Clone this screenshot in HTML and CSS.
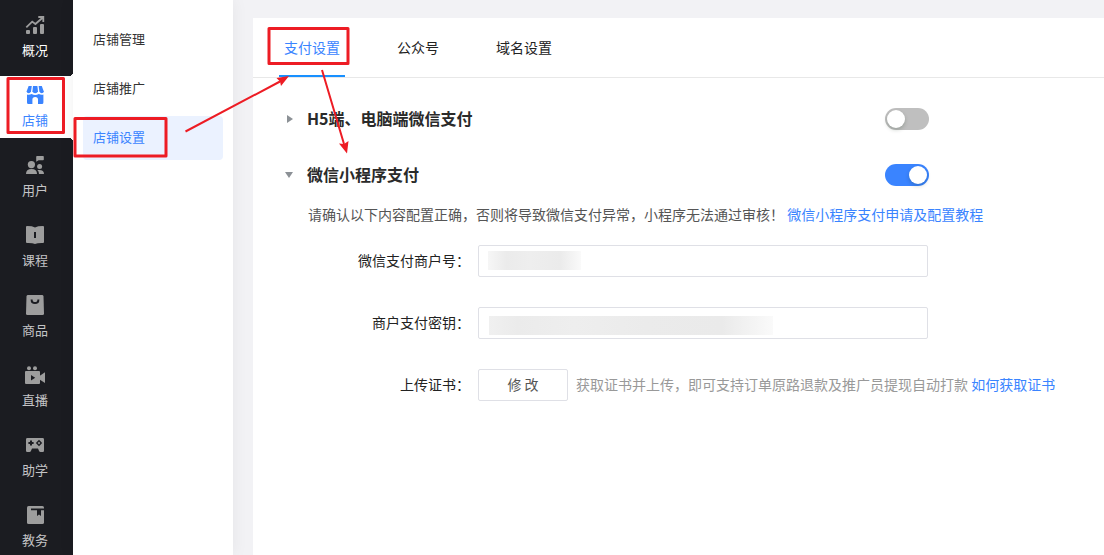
FILE: index.html
```
<!DOCTYPE html>
<html lang="zh-CN">
<head>
    <meta charset="utf-8">
    <title>店铺设置</title>
    <link rel="stylesheet" href="styles.css">
</head>
<body>
    <div class="layout">
        <nav class="sidebar">
            <a class="nav-item current" href="#">
                <svg class="nav-icon" viewBox="0 0 20 20">
                    <rect x="1" y="14" width="4" height="4" rx="1"/>
                    <rect x="8" y="11" width="4" height="7" rx="1"/>
                    <rect x="15" y="8" width="4" height="10" rx="1"/>
                    <path class="line" d="M1.3 11.3L7.2 5.6L10.4 8L17.6 1.7M13.3 1H18.3V6"/>
                </svg>
                <span>概况</span>
            </a>
            <a class="nav-item active" href="#">
                <svg class="nav-icon" viewBox="0 0 20 20">
                    <path d="M3.6 0H6.8L6 5.6Q5.2 7.3 3.7 7.3Q1.8 7.3 1.6 5.5Z"/>
                    <path d="M8 0H12.4L13 5.6Q12.2 7.3 10.2 7.3Q8.2 7.3 7.4 5.6Z"/>
                    <path d="M13.6 0H16.8L18.8 5.5Q18.6 7.3 16.7 7.3Q15.2 7.3 14.4 5.6Z"/>
                    <path d="M2 8.6Q4.6 9.2 6.6 8Q10.2 10 13.8 8Q15.8 9.2 18.4 8.6V16.5Q18.4 18 17 18H13V13.5Q13 11 10.2 11Q7.4 11 7.4 13.5V18H3.4Q2 18 2 16.5Z"/>
                </svg>
                <span>店铺</span>
            </a>
            <a class="nav-item" href="#">
                <svg class="nav-icon" viewBox="0 0 20 20">
                    <circle cx="6.4" cy="8.6" r="3.6"/>
                    <path d="M1 18Q1 13 6.5 13Q12 13 12 18Z"/>
                    <circle cx="14.6" cy="10.4" r="2.5"/>
                    <path d="M12.4 14.1Q19 13.2 19 18H14Q14 15.6 12.4 14.1Z"/>
                    <path d="M12 0H18Q18.8 0 18.8 .8V3.4Q18.8 4.2 18 4.2H13.6L11.2 5.8V.8Q11.2 0 12 0Z"/>
                </svg>
                <span>用户</span>
            </a>
            <a class="nav-item" href="#">
                <svg class="nav-icon" viewBox="0 0 20 20">
                    <path d="M2 0Q7.5 0 10 1.4Q12.5 0 18 0Q19 0 19 1V16Q19 17 18 17Q12.5 16.8 10 18Q7.5 16.8 2 17Q1 17 1 16V1Q1 0 2 0Z"/>
                    <rect class="hole" x="9" y="6" width="2" height="6"/>
                </svg>
                <span>课程</span>
            </a>
            <a class="nav-item" href="#">
                <svg class="nav-icon" viewBox="0 0 20 20">
                    <path d="M3 -1H17Q18.4 -1 18.5 .4L19 17.5Q19 19 17.6 19H2.4Q1 19 1 17.5L1.5 .4Q1.6 -1 3 -1Z"/>
                    <path class="hole-line" d="M6.6 3.4Q6.6 7 10 7Q13.4 7 13.4 3.4"/>
                </svg>
                <span>商品</span>
            </a>
            <a class="nav-item" href="#">
                <svg class="nav-icon" viewBox="0 0 20 20">
                    <circle cx="4" cy="2.2" r="2"/>
                    <circle cx="10" cy="2.2" r="2"/>
                    <rect x="0" y="5" width="15" height="13" rx="1"/>
                    <path d="M14.5 10L20 6.2V17L14.5 13.4Z"/>
                    <path class="hole" d="M6 9V14.4L10.2 11.7Z"/>
                </svg>
                <span>直播</span>
            </a>
            <a class="nav-item" href="#">
                <svg class="nav-icon" viewBox="0 0 20 20">
                    <path d="M2.4 2H17.6Q19 2 19 3.4V14.8Q19 16 17.8 16H15.4Q14.6 16 14.2 15.2L13 12.6H7L5.8 15.2Q5.4 16 4.6 16H2.2Q1 16 1 14.8V3.4Q1 2 2.4 2Z"/>
                    <path class="hole" d="M5 4.4H7V6H8.6V8H7V9.6H5V8H3.4V6H5Z"/>
                    <path class="hole" d="M14 3.8L17.2 7L14 10.2L10.8 7Z"/>
                    <path d="M14 5.7L15.3 7L14 8.3L12.7 7Z"/>
                </svg>
                <span>助学</span>
            </a>
            <a class="nav-item" href="#">
                <svg class="nav-icon" viewBox="0 0 20 20">
                    <rect x="2" y="0" width="17" height="18" rx="1.6"/>
                    <path class="hole" d="M6 2.4H19V4.2H16V10L14 8.4L12 10V4.2H6Z"/>
                </svg>
                <span>教务</span>
            </a>
        </nav>

        <nav class="submenu">
            <a class="submenu-item" href="#">店铺管理</a>
            <a class="submenu-item" href="#">店铺推广</a>
            <a class="submenu-item active" href="#">店铺设置</a>
        </nav>

        <main class="content">
            <div class="card">
                <div class="tabs" role="tablist">
                    <button class="tab active" type="button" role="tab" aria-selected="true">支付设置</button>
                    <button class="tab" type="button" role="tab" aria-selected="false">公众号</button>
                    <button class="tab" type="button" role="tab" aria-selected="false">域名设置</button>
                </div>

                <div class="panels">
                    <div class="panel-head">
                        <span class="arrow arrow-right"></span>
                        <label class="panel-title" for="h5Pay">H5端、电脑端微信支付</label>
                        <input class="switch" type="checkbox" id="h5Pay">
                    </div>
                    <div class="panel-head">
                        <span class="arrow arrow-down"></span>
                        <label class="panel-title" for="miniPay">微信小程序支付</label>
                        <input class="switch" type="checkbox" id="miniPay" checked>
                    </div>

                    <p class="tip">请确认以下内容配置正确，否则将导致微信支付异常，小程序无法通过审核！ <a href="#">微信小程序支付申请及配置教程</a></p>

                    <form class="form">
                        <div class="form-row">
                            <label class="form-label" for="merchantId">微信支付商户号：</label>
                            <input class="form-input masked-short" type="text" id="merchantId">
                        </div>
                        <div class="form-row">
                            <label class="form-label" for="merchantKey">商户支付密钥：</label>
                            <input class="form-input masked-long" type="text" id="merchantKey">
                        </div>
                        <div class="form-row">
                            <label class="form-label" for="certBtn">上传证书：</label>
                            <button class="btn" type="button" id="certBtn">修 改</button>
                            <span class="hint">获取证书并上传，即可支持订单原路退款及推广员提现自动打款 <a href="#">如何获取证书</a></span>
                        </div>
                    </form>
                </div>
            </div>
        </main>
    </div>

    <!-- red guide marks: store > store settings > payment settings -->
    <svg class="guide" width="400" height="200" viewBox="0 0 400 200">
        <rect x="8" y="78.5" width="55.5" height="54"/>
        <rect x="75" y="118.5" width="91" height="37.5"/>
        <rect x="269" y="28.5" width="79" height="35"/>
        <path class="guide-line" d="M185.5 131.5L280 81.5M322 70L344 144"/>
        <path class="guide-head" d="M289 76L276.5 78L280 81.5L281 86ZM347 153.5L339 143.5L344 144L348.5 141Z"/>
    </svg>
</body>
</html>
```
FILE: styles.css
```
* {
    box-sizing: border-box;
}
body {
    margin: 0;
    font-family: "Noto Sans CJK SC", sans-serif;
    font-size: 14px;
    line-height: 22px;
    color: #222;
    background: #f2f2f5;
}
a {
    color: #3a84ff;
    text-decoration: none;
}
button, input {
    font-family: inherit;
    font-size: 14px;
}
.layout {
    display: flex;
    height: 100vh;
    overflow: hidden;
}

/* dark navigation */
.sidebar {
    flex: none;
    display: flex;
    flex-direction: column;
    gap: 8px;
    width: 73px;
    padding-top: 6px;
    background: #1b1c21;
}
.nav-item {
    flex: none;
    position: relative;
    display: flex;
    flex-direction: column;
    align-items: center;
    gap: 3px;
    height: 62px;
    padding: 10px 3px 0 0;
    font-size: 13px;
    color: #c4c4c6;
}
.nav-item.current {
    color: #fff;
}
.nav-item.active {
    color: #3a84ff;
    background: #fff;
}
.nav-item.active::before,
.nav-item.active::after {
    content: "";
    position: absolute;
    right: 0;
    width: 4px;
    height: 4px;
}
.nav-item.active::before {
    top: -4px;
    background: radial-gradient(circle at 0 0, #1b1c21 4px, #fff 4px);
}
.nav-item.active::after {
    bottom: -4px;
    background: radial-gradient(circle at 0 100%, #1b1c21 4px, #fff 4px);
}
.nav-icon {
    width: 20px;
    height: 20px;
    fill: #9d9d9d;
    overflow: visible;
}
.nav-item.active .nav-icon {
    fill: #3a84ff;
}
.nav-icon .line {
    fill: none;
    stroke: #9d9d9d;
    stroke-width: 1.8;
}
.nav-icon .hole {
    fill: #1b1c21;
}
.nav-icon .hole-line {
    fill: none;
    stroke: #1b1c21;
    stroke-width: 2;
}

/* second level menu */
.submenu {
    flex: none;
    position: relative;
    display: flex;
    flex-direction: column;
    gap: 5px;
    width: 160px;
    padding: 18px 10px;
    background: #fff;
    box-shadow: 0 0 16px rgba(0, 0, 0, 0.06);
}
.submenu-item {
    padding: 0 10px 2px;
    font-size: 13px;
    line-height: 42px;
    color: #333;
    border-radius: 4px;
}
.submenu-item.active {
    color: #3a84ff;
    background: #ebf2ff;
}

.content {
    flex: 1;
    min-width: 0;
    display: flex;
    padding: 18px 0 0 20px;
}
.card {
    flex: 1;
    min-width: 0;
    background: #fff;
}
.tabs {
    display: flex;
    gap: 47px;
    padding-left: 26px;
    border-bottom: 1px solid #e8e8e8;
}
.tab {
    height: 59px;
    padding: 0 5px;
    color: #222;
    background: none;
    border: none;
    border-bottom: 2px solid transparent;
    cursor: pointer;
}
.tab.active {
    color: #3a84ff;
    border-bottom-color: #1890ff;
}

/* payment panels */
.panels {
    padding: 30px 20px 0 32px;
}
.panel-head {
    display: flex;
    align-items: center;
    max-width: 644px;
    height: 22px;
    margin-bottom: 34px;
}
.arrow {
    margin-right: 14px;
    border: 0 solid transparent;
}
.arrow-right {
    margin-left: 2px;
    border-width: 4px 0 4px 6px;
    border-left-color: #8c9196;
}
.arrow-down {
    border-width: 6px 4px 0;
    border-top-color: #8c9196;
}
.panel-title {
    flex: 1;
    padding-bottom: 2px;
    font-size: 16px;
    font-weight: bold;
    color: #2a2a2a;
}
.switch {
    appearance: none;
    width: 44px;
    height: 22px;
    margin: 0;
    padding: 2px;
    border-radius: 11px;
    background: #bfbfbf;
    cursor: pointer;
}
.switch::before {
    content: "";
    display: block;
    width: 18px;
    height: 18px;
    border-radius: 50%;
    background: #fff;
    box-shadow: 0 2px 4px rgba(0, 35, 11, 0.2);
}
.switch:checked {
    background: #3a84ff;
}
.switch:checked::before {
    margin-left: auto;
}
.tip {
    margin: -17px 0 20px;
    padding-left: 23px;
    color: #555;
    white-space: nowrap;
}
.form {
    display: flex;
    flex-direction: column;
    gap: 30px;
}
.form-row {
    display: flex;
    align-items: center;
    gap: 8px;
}
.form-label {
    flex: none;
    width: 185px;
    padding-bottom: 2px;
    text-align: right;
    color: #222;
}
.form-input {
    flex: 0 1 450px;
    min-width: 0;
    height: 32px;
    padding: 0 10px;
    border: 1px solid #dfe0e6;
    border-radius: 2px;
    background: #fff no-repeat;
    outline: none;
}
/* smudges that hide the saved values */
.masked-short {
    background-image: linear-gradient(90deg, #f6f6f6, #ebebeb 20%, #eee 45%, #ebebeb 78%, #fafafa);
    background-size: 93px 19px;
    background-position: 9px 5px;
}
.masked-long {
    background-image: linear-gradient(90deg, #f0f0f0, #ebebeb 10%, #eee 30%, #ebebeb 55%, #eaeaea 82%, #fafafa);
    background-size: 284px 19px;
    background-position: 10px 8px;
}
.btn {
    flex: none;
    width: 90px;
    height: 32px;
    padding: 0 0 2px;
    color: #555;
    background: #fff;
    border: 1px solid #dfe0e6;
    border-radius: 2px;
    cursor: pointer;
}
.hint {
    padding-bottom: 2px;
    color: #999;
    white-space: nowrap;
}

.guide {
    position: absolute;
    top: 0;
    left: 0;
    fill: none;
    stroke: #ed1c24;
    stroke-width: 3;
    stroke-linejoin: round;
    pointer-events: none;
}
.guide-line {
    stroke-width: 2;
}
.guide-head {
    fill: #ed1c24;
    stroke: none;
}
```
